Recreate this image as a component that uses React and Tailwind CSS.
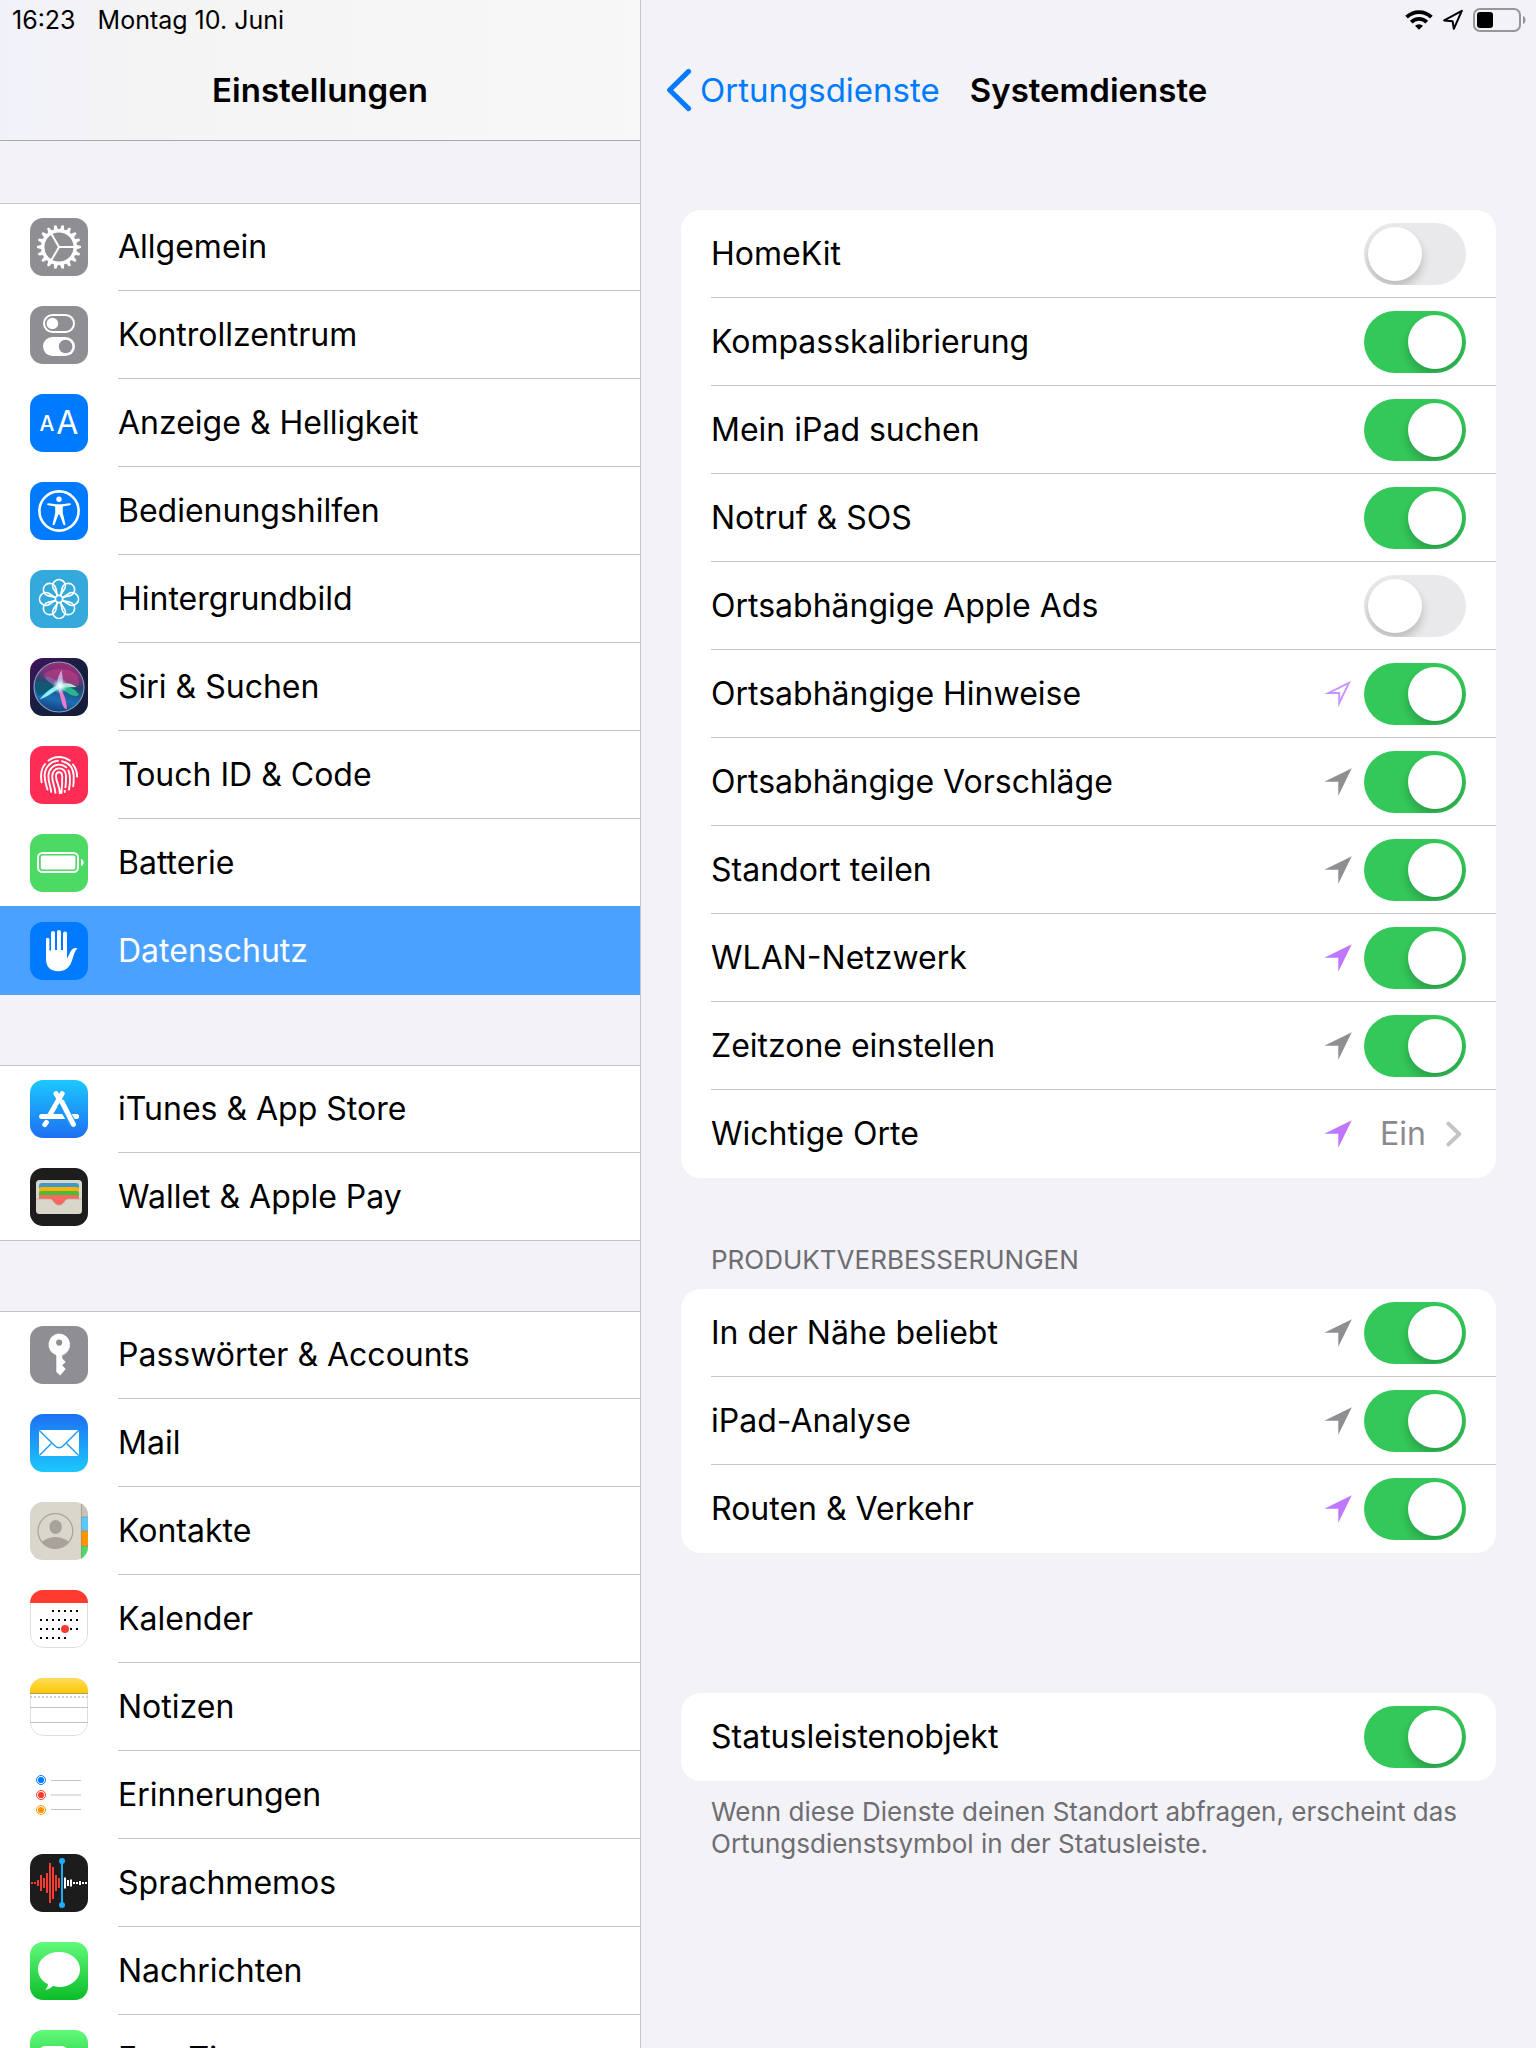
/**
 * App.jsx — Split-view settings screen: category list on the left, system services on the right.
 */
import { useId, useState } from 'react';

const GEAR_TEETH = Array.from({ length: 18 }, (_, i) => i * 20);
const PETALS = [0, 45, 90, 135, 180, 225, 270, 315];

function Tile({ bg, children }) {
  const id = useId();
  return (
    <svg viewBox="0 0 58 58" className="w-[58px] h-[58px] shrink-0" aria-hidden="true">
      <clipPath id={id}>
        <rect width="58" height="58" rx="13" />
      </clipPath>
      <g clipPath={`url(#${id})`}>
        <rect width="58" height="58" fill={bg} />
        {children}
      </g>
    </svg>
  );
}

function Gradient({ id, from, to }) {
  return (
    <linearGradient id={id} x1="0" y1="0" x2="0" y2="1">
      <stop offset="0" stopColor={from} />
      <stop offset="1" stopColor={to} />
    </linearGradient>
  );
}

function GearIcon() {
  return (
    <Tile bg="#8e8e93">
      <circle cx="29" cy="29" r="16.3" fill="none" stroke="#fff" strokeWidth="3.4" />
      {GEAR_TEETH.map((a) => (
        <path key={a} d="M45.5 26.6L51 27.9V30.1L45.5 31.4Z" fill="#fff" transform={`rotate(${a} 29 29)`} />
      ))}
      {[0, 120, 240].map((a) => (
        <path key={a} d="M29 29H45" stroke="#fff" strokeWidth="2" transform={`rotate(${a} 29 29)`} />
      ))}
    </Tile>
  );
}

function ControlCenterIcon() {
  return (
    <Tile bg="#8e8e93">
      <rect x="14" y="9" width="30" height="17" rx="8.5" fill="none" stroke="#fff" strokeWidth="2" />
      <circle cx="22.4" cy="17.5" r="5.8" fill="#fff" />
      <rect x="13" y="31" width="32" height="19" rx="9.5" fill="#fff" />
      <circle cx="35.6" cy="40.5" r="6.8" fill="#8e8e93" />
    </Tile>
  );
}

function DisplayIcon() {
  return (
    <Tile bg="#007aff">
      <g fill="#fff" fontFamily="Inter, sans-serif" textAnchor="middle">
        <text x="17" y="37" fontSize="21" fontWeight="500">A</text>
        <text x="37.4" y="40" fontSize="32" fontWeight="400">A</text>
      </g>
    </Tile>
  );
}

function AccessibilityIcon() {
  return (
    <Tile bg="#007aff">
      <circle cx="29" cy="29" r="19.6" fill="none" stroke="#fff" strokeWidth="2.6" />
      <circle cx="29" cy="17.2" r="2.7" fill="#fff" />
      <path
        d="M18.4 21.2L26.4 22.2H31.6L39.6 21.2Q40.8 21.2 40.9 22.2Q40.9 23 39.8 23.3L32.8 24.6V31L35.4 42Q35.5 43 34.6 43.3Q33.6 43.4 33.3 42.5L29.6 32.6H28.4L24.7 42.5Q24.4 43.4 23.4 43.3Q22.5 43 22.6 42L25.2 31V24.6L18.2 23.3Q17.1 23 17.1 22.2Q17.2 21.2 18.4 21.2Z"
        fill="#fff"
      />
    </Tile>
  );
}

function WallpaperIcon() {
  return (
    <Tile bg="#34aadc">
      <g fill="none" stroke="#fff" strokeWidth="1.7">
        <circle cx="29" cy="29" r="3.6" />
        {PETALS.map((a) => (
          <path
            key={a}
            d="M27.8 25.4L23.8 19.4A6.3 6.3 0 1 1 34.2 19.4L30.2 25.4"
            transform={`rotate(${a} 29 29)`}
          />
        ))}
      </g>
    </Tile>
  );
}

function SiriIcon() {
  return (
    <Tile bg="url(#siri-bg)">
      <defs>
        <linearGradient id="siri-bg" x1="0" y1="0" x2="1" y2="1">
          <stop offset="0" stopColor="#43125f" />
          <stop offset="0.5" stopColor="#15203f" />
          <stop offset="1" stopColor="#151b38" />
        </linearGradient>
        <linearGradient id="siri-orb" x1="0.6" y1="0" x2="0.4" y2="1">
          <stop offset="0" stopColor="#a02a72" />
          <stop offset="0.25" stopColor="#74357c" />
          <stop offset="0.45" stopColor="#24486f" />
          <stop offset="0.75" stopColor="#1a6fb5" />
          <stop offset="1" stopColor="#173a78" />
        </linearGradient>
        <radialGradient id="siri-core">
          <stop offset="0" stopColor="#fff" />
          <stop offset="0.4" stopColor="#d4f6f8" stopOpacity="0.85" />
          <stop offset="1" stopColor="#7fd8e8" stopOpacity="0" />
        </radialGradient>
        <filter id="siri-soft" x="-20%" y="-20%" width="140%" height="140%">
          <feGaussianBlur stdDeviation="0.6" />
        </filter>
      </defs>
      <circle cx="29" cy="29" r="25" fill="url(#siri-orb)" stroke="#8aa0bd" strokeWidth="1.1" />
      <g filter="url(#siri-soft)">
        <path d="M13 17C19 10 38 9 47 17C50 22 49 27 48 28C40 26 34 26 30 27C25 21 19 18 13 17Z" fill="#c43a7e" opacity="0.6" />
        <path d="M14 18C21 18 27 22 30 29C24 28 18 25 14 18Z" fill="#b46cc0" opacity="0.6" />
        <path d="M5 28C8 23 16 23 28 29C21 33 12 36 8 38Z" fill="#115a74" opacity="0.9" />
        <path d="M31 28C39 28 46 31 49 37C45 40 38 36 31 30Z" fill="#27c08c" opacity="0.9" />
        <path d="M9.6 41.4C16 33.4 22 29 30 26.4L32.4 29C24 33 18 39 9.6 41.4Z" fill="#86f4f2" />
        <path d="M27.6 28C32.4 31 36.4 41 37 51C32.4 52 31.6 42 27.6 28Z" fill="#f279cc" />
        <path d="M28.6 28C26 22 29 17 31.6 12C32.4 19 34 24 31.4 29Z" fill="#cbbcf0" opacity="0.85" />
        <path d="M31 27C37 23.6 41 25.6 47 29C40 29.4 35 29.4 31 29.4Z" fill="#c2efe0" opacity="0.9" />
      </g>
      <circle cx="30" cy="28" r="8" fill="url(#siri-core)" />
    </Tile>
  );
}

function TouchIdIcon() {
  return (
    <Tile bg="#ff2d55">
      <g fill="none" stroke="#fff" strokeWidth="1.9" strokeLinecap="round">
        <path d="M18.5 14.6C24.5 9.8 33.5 9.8 39.8 14.6" />
        <path d="M15 18C11.3 22.4 10.2 28 11.6 36.4" />
        <path d="M43 18.6C45.6 21.8 47 26 47.2 30.6" />
        <path d="M17.4 43.6C16 38 14.4 34 14.6 29C15 21 21 15.2 28 14.8" />
        <path d="M32 15.2C39 16.8 43.2 22 43.6 29C43.8 33 43.8 36.6 43.2 40.4" />
        <path d="M21.2 45.8C20.4 39.6 18.2 35.4 18.4 29.6C18.8 23 23.6 18.6 29 18.6C32 18.6 34.4 19.6 36.4 21.4" />
        <path d="M38.4 24.4C40.4 29 40.2 37 39 43.6" />
        <path d="M25.4 46.8C25 40.4 22 36 22.2 30C22.4 25.6 25.2 22.4 29 22.4C33.2 22.4 35.8 25.4 36 30C36 34 36 37.6 35.4 41.4" />
        <path d="M34.8 44.8V46" />
        <path d="M29.8 47.2C30 40 26 36 26 30.4C26 27.6 27.2 26.2 29 26.2C31.2 26.2 32.2 28 32.2 30.4C32.4 37 32.2 40 31.4 47" />
      </g>
    </Tile>
  );
}

function BatteryTileIcon() {
  return (
    <Tile bg="#4cd964">
      <rect x="8" y="19" width="40" height="19" rx="4.5" fill="none" stroke="#fff" strokeWidth="2" />
      <rect x="10.8" y="21.6" width="34.6" height="13.8" rx="2" fill="#fff" />
      <path d="M51 25C54.6 25.6 54.6 31.4 51 32Z" fill="#fff" />
    </Tile>
  );
}

function PrivacyIcon() {
  return (
    <Tile bg="#007aff">
      <path
        d="M16 17.4A1.7 1.7 0 0 1 19.4 17.4V28.6H21V11A2 2 0 0 1 25 11V28H27V10A2 2 0 0 1 31 10V28H33V11.6A2 2 0 0 1 37 11.6V36.4C39.4 33 40.4 28.4 43 26.8C44.6 25.8 47 25.6 47.6 26.6C44.2 28.8 43.6 35 41.2 40.6C39 46 35.4 49.2 28.6 49.2C20.6 49.2 16 45.2 16 37Z"
        fill="#fff"
      />
    </Tile>
  );
}

function AppStoreIcon() {
  return (
    <Tile bg="url(#store-bg)">
      <Gradient id="store-bg" from="#1bc8fd" to="#1e6ff2" />
      <g fill="none" strokeLinecap="round" stroke="#fff" strokeWidth="5">
        <path d="M11.6 36.6H46.6" />
        <path d="M26 13.6L29 18.6" />
        <path d="M32.2 13.6L19.8 35" />
        <path d="M16.4 42.4L14.8 44.6" />
        <path d="M30.6 23.6L43.4 44.6" stroke="#1e95f8" strokeWidth="8" strokeLinecap="butt" />
        <path d="M32 22L43.4 44.4" />
      </g>
    </Tile>
  );
}

function WalletIcon() {
  return (
    <Tile bg="#1d1d1d">
      <rect x="6" y="12" width="46" height="34" rx="3.5" fill="#d9d7cc" />
      <path d="M9 18Q9 15 12 15H46Q49 15 49 18V20H9Z" fill="#3d9acb" />
      <path d="M9 21Q9 19 12 19H46Q49 19 49 21V24H9Z" fill="#ffb000" />
      <path d="M9 25Q9 23 12 23H46Q49 23 49 25V28H9Z" fill="#4cbb3a" />
      <path d="M9 29Q9 27 12 27H46Q49 27 49 29V31H9Z" fill="#f46c60" />
      <path d="M9 30.6H19.6C23.6 30.6 23.6 37 29 37S34.4 30.6 38.4 30.6H49Z" fill="#f46c60" />
      <path d="M6 31H19.6C23.6 31 23.6 37.2 29 37.2S34.4 31 38.4 31H52" fill="none" stroke="#c3a59a" strokeWidth="0.7" />
    </Tile>
  );
}

function KeyIcon() {
  return (
    <Tile bg="#8e8e93">
      <path
        d="M29 7.2A11.4 11.4 0 0 1 32.6 29.4V32.6L36 36L32.6 39.2L36 43L30.2 49.8L26 46V29.4A11.4 11.4 0 0 1 29 7.2Z"
        fill="#fff"
        stroke="#7e7e83"
        strokeWidth="0.5"
      />
      <circle cx="29.2" cy="16.6" r="3.1" fill="#8e8e93" />
    </Tile>
  );
}

function MailIcon() {
  return (
    <Tile bg="url(#mail-bg)">
      <Gradient id="mail-bg" from="#1e70f2" to="#1bc8fd" />
      <rect x="9" y="16" width="40" height="26" rx="1.5" fill="#fff" />
      <g fill="none" stroke="#1e9bf8" strokeWidth="1.4">
        <path d="M9.4 16.4L24 31Q29 36.6 34 31L48.6 16.4" />
        <path d="M9.4 41.6L21.4 29.4" />
        <path d="M48.6 41.6L36.6 29.4" />
      </g>
    </Tile>
  );
}

function ContactsIcon() {
  return (
    <Tile bg="#d9d6cc">
      <rect x="51" width="7" height="15" fill="#c6c2b8" />
      <rect x="51" y="15" width="7" height="14" fill="#5ac8fa" />
      <rect x="51" y="29" width="7" height="15" fill="#ff9500" />
      <rect x="51" y="44" width="7" height="14" fill="#4cd964" />
      <path d="M51.4 0V58M51 15H58M51 29H58M51 44H58" stroke="#8d8a80" strokeWidth="0.8" opacity="0.7" />
      <clipPath id="contact-ring">
        <circle cx="25.4" cy="29" r="17.4" />
      </clipPath>
      <ellipse cx="25.6" cy="25" rx="6.2" ry="7" fill="#a9a29a" />
      <ellipse cx="25.4" cy="44" rx="15" ry="9" fill="#a9a29a" clipPath="url(#contact-ring)" />
      <circle cx="25.4" cy="29" r="17.4" fill="none" stroke="#a9a29a" strokeWidth="1.2" />
    </Tile>
  );
}

const CALENDAR_DAYS = [
  [23, 29, 35, 41, 47],
  [11, 17, 23, 29, 35, 41, 47],
  [11, 17, 23, 29, 35, 41, 47],
  [11, 17, 23, 29, 35],
];

function CalendarIcon() {
  return (
    <Tile bg="#fff">
      <rect x="0.5" y="0.5" width="57" height="57" rx="12.5" fill="none" stroke="#dedede" />
      <rect width="58" height="13" fill="#ff3b30" />
      {CALENDAR_DAYS.map((row, i) =>
        row.map((x) => <rect key={`${x}-${i}`} x={x - 1} y={20 + i * 9} width="2" height="2" fill="#000" />)
      )}
      <circle cx="35" cy="39" r="4" fill="#ff3b30" />
    </Tile>
  );
}

function NotesIcon() {
  return (
    <Tile bg="#fff">
      <Gradient id="notes-top" from="#fddc5c" to="#ffc800" />
      <rect x="0.5" y="0.5" width="57" height="57" rx="12.5" fill="none" stroke="#dedede" />
      <rect width="58" height="15" fill="url(#notes-top)" />
      <path d="M0 15.5H58" stroke="#a89a6c" />
      <path d="M0 19H58" stroke="#cfcfcf" strokeWidth="2" strokeDasharray="2 2" />
      <path d="M0 29.5H58M0 44.5H58" stroke="#c4c4c6" />
    </Tile>
  );
}

function RemindersIcon() {
  return (
    <Tile bg="#fff">
      {['#007aff', '#ff3b30', '#ff9500'].map((color, i) => (
        <g key={color}>
          <circle cx="11" cy={14 + i * 15} r="4.5" fill="none" stroke={color} strokeWidth="1" />
          <circle cx="11" cy={14 + i * 15} r="3.1" fill={color} />
          <path d={`M21 ${14.5 + i * 14.5}H51`} stroke="#c4c4c6" />
        </g>
      ))}
    </Tile>
  );
}

const WAVE = [1, 1, 3, 8, 5, 10, 20, 16, 8, 5, 0, 5.5, 3, 3.5, 1, 1, 2, 1, 1];

function VoiceMemosIcon() {
  return (
    <Tile bg="#1c1c1c">
      {WAVE.map((h, i) => (
        <rect key={i} x={1 + i * 3} y={29 - h} width="2" height={h * 2} fill={i < 10 ? '#f63b30' : '#fff'} />
      ))}
      <path d="M32 7V51" stroke="#1badf8" strokeWidth="2" />
      <circle cx="32" cy="7" r="3" fill="#1badf8" />
      <circle cx="32" cy="51" r="3" fill="#1badf8" />
    </Tile>
  );
}

function MessagesIcon() {
  return (
    <Tile bg="url(#messages-bg)">
      <Gradient id="messages-bg" from="#61fa7c" to="#0bbc28" />
      <path
        d="M29 10C40.6 10 50 17.6 50 27.4S40.6 44.9 29 44.9C26.8 44.9 24.7 44.6 22.8 44.1C20.6 46.4 18 47.7 15.2 47.8C17 46.2 18 44.4 17.9 42.1C11.8 39 8 33.6 8 27.4C8 17.6 17.4 10 29 10Z"
        fill="#fff"
      />
    </Tile>
  );
}

function FaceTimeIcon() {
  return (
    <Tile bg="url(#facetime-bg)">
      <Gradient id="facetime-bg" from="#61fa7c" to="#0bbc28" />
      <rect x="9" y="16" width="29" height="26" rx="6" fill="#fff" />
      <path d="M40 25L47 18Q49 17 49 19V39Q49 41 47 40L40 33Z" fill="#fff" />
    </Tile>
  );
}

const SIDEBAR_GROUPS = [
  [
    { label: 'Allgemein', Icon: GearIcon },
    { label: 'Kontrollzentrum', Icon: ControlCenterIcon },
    { label: 'Anzeige & Helligkeit', Icon: DisplayIcon },
    { label: 'Bedienungshilfen', Icon: AccessibilityIcon },
    { label: 'Hintergrundbild', Icon: WallpaperIcon },
    { label: 'Siri & Suchen', Icon: SiriIcon },
    { label: 'Touch ID & Code', Icon: TouchIdIcon },
    { label: 'Batterie', Icon: BatteryTileIcon },
    { label: 'Datenschutz', Icon: PrivacyIcon },
  ],
  [
    { label: 'iTunes & App Store', Icon: AppStoreIcon },
    { label: 'Wallet & Apple Pay', Icon: WalletIcon },
  ],
  [
    { label: 'Passwörter & Accounts', Icon: KeyIcon },
    { label: 'Mail', Icon: MailIcon },
    { label: 'Kontakte', Icon: ContactsIcon },
    { label: 'Kalender', Icon: CalendarIcon },
    { label: 'Notizen', Icon: NotesIcon },
    { label: 'Erinnerungen', Icon: RemindersIcon },
    { label: 'Sprachmemos', Icon: VoiceMemosIcon },
    { label: 'Nachrichten', Icon: MessagesIcon },
    { label: 'FaceTime', Icon: FaceTimeIcon },
  ],
];

const SERVICES = [
  { label: 'HomeKit', on: false },
  { label: 'Kompasskalibrierung', on: true },
  { label: 'Mein iPad suchen', on: true },
  { label: 'Notruf & SOS', on: true },
  { label: 'Ortsabhängige Apple Ads', on: false },
  { label: 'Ortsabhängige Hinweise', on: true, arrow: 'outline' },
  { label: 'Ortsabhängige Vorschläge', on: true, arrow: 'gray' },
  { label: 'Standort teilen', on: true, arrow: 'gray' },
  { label: 'WLAN-Netzwerk', on: true, arrow: 'purple' },
  { label: 'Zeitzone einstellen', on: true, arrow: 'gray' },
  { label: 'Wichtige Orte', value: 'Ein', arrow: 'purple' },
];

const IMPROVEMENTS = [
  { label: 'In der Nähe beliebt', on: true, arrow: 'gray' },
  { label: 'iPad-Analyse', on: true, arrow: 'gray' },
  { label: 'Routen & Verkehr', on: true, arrow: 'purple' },
];

function LocationArrow({ kind }) {
  if (kind === 'outline') {
    return (
      <svg viewBox="0 0 28 28" className="w-7 h-7 shrink-0" aria-hidden="true">
        <path d="M4.4 13L25 2.8L15.2 23V13Z" fill="none" stroke="#c994ff" strokeWidth="1.9" strokeMiterlimit="10" />
      </svg>
    );
  }
  return (
    <svg viewBox="0 0 28 28" className="w-7 h-7 shrink-0" aria-hidden="true">
      <path d="M0.3 13.8L27.8 0.2L14.3 27.8V13.8Z" fill={kind === 'purple' ? '#bf77ff' : '#8e8e93'} />
    </svg>
  );
}

function Switch({ id, defaultOn }) {
  const [on, setOn] = useState(defaultOn);
  return (
    <input
      id={id}
      type="checkbox"
      role="switch"
      checked={on}
      onChange={(e) => setOn(e.target.checked)}
      className="appearance-none shrink-0 w-[102px] h-[62px] p-1 rounded-full bg-[#e9e9eb] checked:bg-[#34c759] cursor-pointer before:block before:w-[54px] before:h-[54px] before:rounded-full before:bg-white before:shadow-[0_6px_10px_rgba(0,0,0,0.2)] checked:before:ml-10 overflow-hidden"
    />
  );
}

function ServiceRow({ item }) {
  const id = useId();
  const inner = 'flex items-center h-full pr-[30px] border-y border-t-transparent border-b-[#c6c6c8] group-last:border-b-transparent';
  if (item.value) {
    return (
      <li className="group h-[88px] pl-[30px]">
        <a href="#orte" className={inner}>
          <span className="flex-1">{item.label}</span>
          <LocationArrow kind={item.arrow} />
          <span className="ml-7 text-[#8a8a8e]">{item.value}</span>
          <svg viewBox="0 0 16 26" className="ml-5 mr-1 w-4 h-[26px]" aria-hidden="true">
            <path d="M2.4 2.6L13.2 13L2.4 23.4" fill="none" stroke="#c4c4c6" strokeWidth="4" strokeLinecap="round" strokeLinejoin="round" />
          </svg>
        </a>
      </li>
    );
  }
  return (
    <li className="group h-[88px] pl-[30px]">
      <div className={inner}>
        <label htmlFor={id} className="flex-1">
          {item.label}
        </label>
        <span className="flex items-center gap-3">
          {item.arrow && <LocationArrow kind={item.arrow} />}
          <Switch id={id} defaultOn={item.on} />
        </span>
      </div>
    </li>
  );
}

function Card({ items }) {
  return (
    <ul className="bg-white rounded-[20px]">
      {items.map((item) => (
        <ServiceRow key={item.label} item={item} />
      ))}
    </ul>
  );
}

function Sidebar() {
  const [selected, setSelected] = useState('Datenschutz');
  return (
    <aside className="w-5/12 shrink-0">
      <header className="h-[141px] border-b border-[#a9a9ac] bg-linear-to-r from-[#f1f1fa] via-[#f4f4f4] via-25% to-[#f8f8f8]">
        <div className="flex gap-[22px] h-10 pl-3 items-center text-[25px]">
          <span>16:23</span>
          <span>Montag 10. Juni</span>
        </div>
        <h1 className="h-[100px] flex items-center justify-center text-[33px] font-semibold">Einstellungen</h1>
      </header>
      <nav className="pt-[62px] flex flex-col gap-[70px]">
        {SIDEBAR_GROUPS.map((group) => (
          <ul
            key={group[0].label}
            className="bg-white shadow-[inset_0_1px_0_#c6c6c8,inset_0_-1px_0_#c6c6c8]"
          >
            {group.map(({ label, Icon }) => {
              const active = label === selected;
              return (
                <li
                  key={label}
                  className={`group ${active ? 'relative bg-[#4aa1ff] text-white shadow-[0_-1px_0_#4aa1ff]' : ''}`}
                >
                  <a
                    href="#kategorie"
                    onClick={() => setSelected(label)}
                    className="flex items-center gap-[30px] h-[88px] pl-[30px]"
                  >
                    <Icon />
                    <span
                      className={`flex-1 h-full flex items-center border-y border-t-transparent group-last:border-b-transparent ${
                        active ? 'border-b-[#4aa1ff]' : 'border-b-[#c6c6c8]'
                      }`}
                    >
                      {label}
                    </span>
                  </a>
                </li>
              );
            })}
          </ul>
        ))}
      </nav>
    </aside>
  );
}

function StatusIcons() {
  return (
    <div className="flex items-center justify-end gap-[10px] h-10 pr-[9px]">
      <svg viewBox="0 0 28 20" className="w-7 h-5" aria-hidden="true">
        <g fill="none" stroke="#000" strokeWidth="3.8">
          <path d="M1.6 7.2A17.6 17.6 0 0 1 26.4 7.2" />
          <path d="M6.2 12.2A11 11 0 0 1 21.8 12.2" />
        </g>
        <path d="M14 19.8L10 15.8A5.8 5.8 0 0 1 18 15.8Z" fill="#000" />
      </svg>
      <svg viewBox="0 0 20 22" className="w-5 h-[22px]" aria-hidden="true">
        <path d="M1.2 11.4L18.8 1.8L10.8 19.8L9.6 12.2Z" fill="none" stroke="#000" strokeWidth="2" strokeLinejoin="round" />
      </svg>
      <svg viewBox="0 0 54 24" className="w-[54px] h-6" aria-hidden="true">
        <rect x="1" y="1" width="46" height="22" rx="6" fill="none" stroke="#97979b" strokeWidth="2" />
        <rect x="4" y="4" width="16" height="16" rx="3" fill="#000" />
        <path d="M50 8C53.4 9 53.4 15 50 16Z" fill="#97979b" />
      </svg>
    </div>
  );
}

function Detail() {
  return (
    <main className="flex-1 min-w-0 border-l border-[#c6c6c8]">
      <StatusIcons />
      <header className="grid grid-cols-[1fr_auto_1fr] items-center h-[100px] pl-[25px] text-[33px]">
        <a href="#ortungsdienste" className="flex items-center gap-2 text-[#007aff]">
          <svg viewBox="0 0 26 44" className="w-[26px] h-11 shrink-0" aria-hidden="true">
            <path d="M22.6 3.4L3.6 22L22.6 40.6" fill="none" stroke="#007aff" strokeWidth="5" strokeLinecap="round" strokeLinejoin="round" />
          </svg>
          Ortungsdienste
        </a>
        <h2 className="font-semibold pr-[25px]">Systemdienste</h2>
      </header>
      <div className="px-10 pt-[70px]">
        <Card items={SERVICES} />
        <h3 className="mt-[66px] mb-[13px] px-[30px] text-[26px] leading-8 text-[#6d6d72]">PRODUKTVERBESSERUNGEN</h3>
        <Card items={IMPROVEMENTS} />
        <div className="mt-[140px]">
          <Card items={[{ label: 'Statusleistenobjekt', on: true }]} />
        </div>
        <p className="mt-[15px] px-[30px] text-[26px] leading-8 text-[#6d6d72]">
          Wenn diese Dienste deinen Standort abfragen, erscheint das Ortungsdienstsymbol in der Statusleiste.
        </p>
      </div>
    </main>
  );
}

export default function App() {
  return (
    <div className="flex h-screen overflow-hidden bg-[#f2f2f7] text-black text-[32px] leading-10 font-[Inter,sans-serif]">
      <Sidebar />
      <Detail />
    </div>
  );
}
